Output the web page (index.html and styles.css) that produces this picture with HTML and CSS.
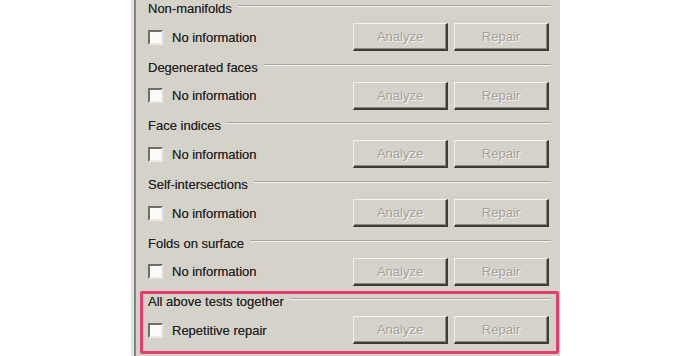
FILE: index.html
```html
<!DOCTYPE html>
<html lang="en">
<head>
    <meta charset="UTF-8">
    <title>Mesh repair</title>
    <link rel="stylesheet" href="styles.css">
</head>
<body>
    <div class="panel">
        <div class="inner">
            <div class="group">
                <div class="title">Non-manifolds</div>
                <div class="row">
                    <label class="check"><span class="box"></span>No information</label>
                    <button disabled>Analyze</button>
                    <button disabled>Repair</button>
                </div>
            </div>
            <div class="group">
                <div class="title">Degenerated faces</div>
                <div class="row">
                    <label class="check"><span class="box"></span>No information</label>
                    <button disabled>Analyze</button>
                    <button disabled>Repair</button>
                </div>
            </div>
            <div class="group">
                <div class="title">Face indices</div>
                <div class="row">
                    <label class="check"><span class="box"></span>No information</label>
                    <button disabled>Analyze</button>
                    <button disabled>Repair</button>
                </div>
            </div>
            <div class="group">
                <div class="title">Self-intersections</div>
                <div class="row">
                    <label class="check"><span class="box"></span>No information</label>
                    <button disabled>Analyze</button>
                    <button disabled>Repair</button>
                </div>
            </div>
            <div class="group">
                <div class="title">Folds on surface</div>
                <div class="row">
                    <label class="check"><span class="box"></span>No information</label>
                    <button disabled>Analyze</button>
                    <button disabled>Repair</button>
                </div>
            </div>
            <div class="group highlight">
                <div class="title">All above tests together</div>
                <div class="row">
                    <label class="check"><span class="box"></span>Repetitive repair</label>
                    <button disabled>Analyze</button>
                    <button disabled>Repair</button>
                </div>
            </div>
        </div>
    </div>
</body>
</html>
```

FILE: styles.css
```css
body {
    margin: 0;
    background: #fff;
    font-family: "Liberation Sans", Arial, sans-serif;
    font-size: 13px;
    color: #222120;
}
.panel {
    margin-left: 131px;
    width: 429px;
    height: 356px;
    border-left: 3px solid #e6e4df;
    box-sizing: border-box;
}
.inner {
    height: 100%;
    background: #d5d2ca;
    border-left: 2px solid #85837e;
    padding: 1px 9px 0 5px;
    box-sizing: border-box;
}
.group {
    position: relative;
    height: 58.7px;
    padding-left: 7px;
    box-sizing: border-box;
}
.title {
    display: flex;
    height: 16px;
    line-height: 16px;
    white-space: nowrap;
    text-shadow: 0 0 0.6px rgba(0, 0, 0, 0.5);
}
.title::after {
    content: "";
    flex: 1;
    align-self: flex-start;
    margin: 4px 0 0 6px;
    border-top: 1px solid #a5a29b;
    border-bottom: 1px solid #f3f2ee;
}
.row {
    display: flex;
    align-items: center;
    margin-top: 6px;
    height: 28px;
    padding-right: 2px;
}
.check {
    flex: 1;
    display: flex;
    align-items: center;
    text-shadow: 0 0 0.6px rgba(0, 0, 0, 0.5);
}
.box {
    width: 15px;
    height: 15px;
    box-sizing: border-box;
    margin-right: 9px;
    background: #fbfbfa;
    border: 2px solid;
    border-color: #6f6d68 #ebe9e4 #ebe9e4 #6f6d68;
}
button {
    width: 95px;
    height: 28px;
    margin-left: 6px;
    padding: 0;
    font-family: inherit;
    font-size: 13px;
    color: #a4a19a;
    text-shadow: 1px 1px 0 #f5f4f0;
    background: #d5d2ca;
    border: 1px solid;
    border-color: #f3f2ee #3c3b38 #3c3b38 #f3f2ee;
    border-width: 1px 2px 2px 1px;
    box-shadow: inset -1px -1px 0 #8e8c86;
}
.highlight::before {
    content: "";
    position: absolute;
    top: -3px;
    left: -1px;
    right: -8px;
    bottom: -1px;
    border: 3px solid #e33d72;
    border-radius: 2px;
    pointer-events: none;
}
```
